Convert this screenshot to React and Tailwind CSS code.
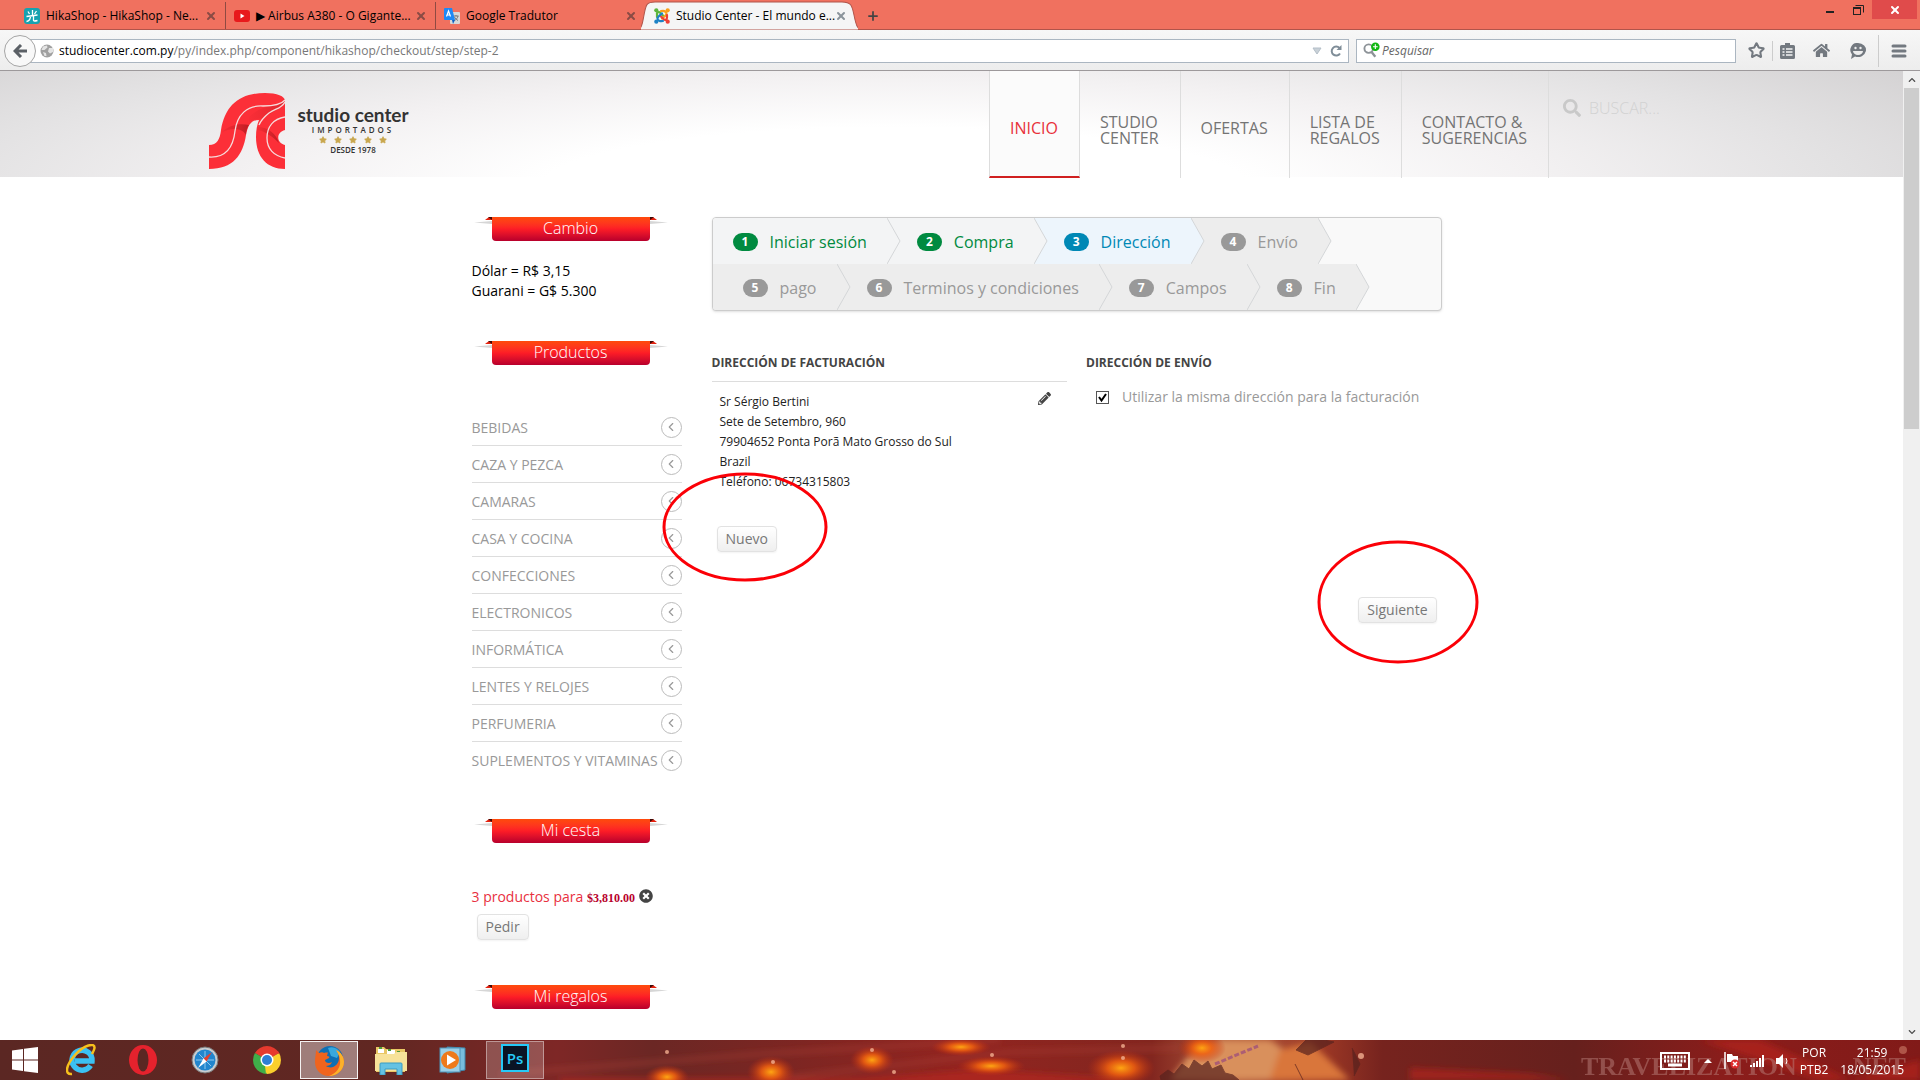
import React, { useState } from 'react';
import { FaSearch, FaPencilAlt, FaTimesCircle, FaHome, FaChevronDown, FaChevronUp } from 'react-icons/fa';
import { Plus, X, Star, ChevronLeft } from 'lucide-react';

const categories = [
  'Bebidas',
  'Caza y pezca',
  'Camaras',
  'Casa y cocina',
  'Confecciones',
  'Electronicos',
  'Informática',
  'Lentes y relojes',
  'Perfumeria',
  'Suplementos y vitaminas',
];

const firstSteps = [
  { number: 1, label: 'Iniciar sesión', status: 'done' },
  { number: 2, label: 'Compra', status: 'done' },
  { number: 3, label: 'Dirección', status: 'current' },
  { number: 4, label: 'Envío', status: 'todo' },
];

const lastSteps = [
  { number: 5, label: 'pago', status: 'todo' },
  { number: 6, label: 'Terminos y condiciones', status: 'todo' },
  { number: 7, label: 'Campos', status: 'todo' },
  { number: 8, label: 'Fin', status: 'todo' },
];

const stepStyles = {
  done: { item: 'bg-[#f3f4f5] text-[#008a40]', badge: 'bg-[#008a40]', arrow: '#f3f4f5' },
  current: { item: 'bg-[#edf5fc] text-[#0088b5]', badge: 'bg-[#0088b5]', arrow: '#edf5fc' },
  todo: { item: 'bg-[#ededed] text-[#999999]', badge: 'bg-[#999999]', arrow: '#ededed' },
};

/* ---------- Browser ---------- */

const HikaIcon = () => (
  <svg width="16" height="16" viewBox="0 0 16 16" className="shrink-0">
    <rect width="16" height="16" rx="3" fill="#17a2b0" />
    <path d="M8.500 2v5M4 3.500l1.500 2.500M12.500 3l-2 3M2.500 8.500L13.500 7M6.500 8c0 3-1.500 5-4 5.500M9.500 8v4.500q0 1 4 0" stroke="#fff" strokeWidth="1.300" fill="none" />
  </svg>
);

const YoutubeIcon = () => (
  <svg width="16" height="16" viewBox="0 0 16 16" className="shrink-0">
    <rect y="2" width="16" height="12" rx="3" fill="#e8191c" />
    <path d="M6.500 5.500v5l4-2.500z" fill="#fff" />
  </svg>
);

const TranslateIcon = () => (
  <svg width="16" height="16" viewBox="0 0 16 16" className="shrink-0">
    <rect x="6" y="4" width="10" height="12" rx="1" fill="#d8d8d8" />
    <path d="M9.500 8h5M12 7v1M14 8c-.5 2.500-2 3.500-3.500 4.500M10.500 9c.5 1.500 2 2.500 3.500 3.500" stroke="#777" fill="none" />
    <path d="M1 0h7l3 12H1a1 1 0 0 1-1-1V1a1 1 0 0 1 1-1z" fill="#1e88f5" />
    <path d="M8 12h3l-2 4z" fill="#0c5fc4" />
    <path d="M2.500 8.500l2-5.500 2 5.500M3.200 7h2.600" stroke="#fff" strokeWidth="1.200" fill="none" />
  </svg>
);

const JoomlaIcon = () => (
  <svg width="16" height="16" viewBox="0 0 16 16" className="shrink-0" fill="none" strokeWidth="2.200" strokeLinecap="round">
    <path d="M3 9V6.500C2.500 4 5 3.500 6.500 5L9.500 8" stroke="#5cb53c" />
    <path d="M7 3C9.500 2.500 12 3 12.500 5.500C13 7 11 8 8 10.500" stroke="#f9a01b" />
    <path d="M13 7V9.500C13 12 11 12.500 9.500 11L6.500 8" stroke="#ee4035" />
    <path d="M9 13C6 13.500 3.500 12.500 3.500 10.500C3.500 9 5 8 8 5.500" stroke="#1d82c5" />
    <g stroke="none">
      <circle cx="2.300" cy="2.300" r="2.100" fill="#5cb53c" />
      <circle cx="13.700" cy="2.300" r="2.100" fill="#f9a01b" />
      <circle cx="13.700" cy="13.700" r="2.100" fill="#ee4035" />
      <circle cx="2.300" cy="13.700" r="2.100" fill="#1d82c5" />
    </g>
  </svg>
);

const Tab = ({ icon, title }) => (
  <div className="flex h-full w-[210px] shrink-0 items-center border-r border-[#8f4a42] pl-2 pr-2">
    {icon}
    <span className="ml-1.5 flex-1 whitespace-nowrap">{title}</span>
    <button aria-label={`Cerrar ${title}`} className="text-[#8a4b45]"><X size={12} strokeWidth={4} /></button>
  </div>
);

const TitleBar = () => (
  <div className="flex h-[30px] items-stretch border-b border-[#b0544a] bg-[#f0715f] pl-4 text-[12px] text-black">
    <div className="flex pt-0.5">
      <Tab icon={<HikaIcon />} title="HikaShop - HikaShop - Ne..." />
      <Tab icon={<YoutubeIcon />} title="▶ Airbus A380 - O Gigante..." />
      <div className="flex w-[205px] shrink-0 items-center pl-2 pr-1">
        <TranslateIcon />
        <span className="ml-1.5 flex-1">Google Tradutor</span>
        <button aria-label="Cerrar Google Tradutor" className="text-[#8a4b45]"><X size={12} strokeWidth={4} /></button>
      </div>
    </div>
    <div className="relative -mb-px mt-px flex w-[217px] shrink-0 items-center pl-[13px] pr-3">
      <svg className="absolute inset-0 h-full w-full" viewBox="0 0 216 29" preserveAspectRatio="none">
        <path d="M-6 29C1 29 1 24 3 14C5 4 5 1 14 1H200C209 1 210 4 212 14C214 24 215 29 222 29z" fill="#f5f5f5" stroke="#b0544a" />
      </svg>
      <div className="relative flex w-full items-center">
        <JoomlaIcon />
        <span className="ml-1.5 flex-1 whitespace-nowrap">Studio Center - El mundo e...</span>
        <button aria-label="Cerrar Studio Center" className="text-[#8b949b]"><X size={12} strokeWidth={4} /></button>
      </div>
    </div>
    <button aria-label="Nueva pestaña" className="ml-2 pt-0.5 text-[#444]"><Plus size={14} strokeWidth={3} /></button>
    <div className="ml-auto flex items-start pr-[3px]">
      <button aria-label="Minimizar" className="flex h-[19px] w-7 items-center justify-center">
        <svg width="8" height="8"><path d="M0 6h8" stroke="#222" strokeWidth="2" /></svg>
      </button>
      <button aria-label="Restaurar" className="flex h-[19px] w-7 items-center justify-center">
        <svg width="11" height="10" fill="none" stroke="#222"><path d="M2.500 0.500h8v7" /><rect x=".5" y="2.500" width="7" height="7" /><path d="M0 3h8" strokeWidth="2" /></svg>
      </button>
      <button aria-label="Cerrar" className="flex h-[19px] w-[45px] items-center justify-center bg-[#e04b4b] text-white">
        <X size={12} strokeWidth={4} />
      </button>
    </div>
  </div>
);

const Toolbar = () => (
  <div className="flex h-[41px] items-center border-b border-[#9d999b] bg-gradient-to-b from-[#f7f7f7] to-[#ededed] pl-1 pr-[3px] pt-px text-[12px]">
    <button aria-label="Atrás" className="relative z-10 flex h-8 w-8 shrink-0 items-center justify-center rounded-full border border-[#a5a5a5] bg-[#f8f8f8]">
      <svg width="14" height="14" viewBox="0 0 14 14" fill="none" stroke="#5b6066" strokeWidth="3"><path d="M14 7H3M8 1L2 7l6 6" /></svg>
    </button>
    <div className="-ml-3 flex h-6 flex-1 items-center border border-[#abb6c1] bg-white pl-[15px] pr-1.5">
      <svg width="14" height="14" viewBox="0 0 14 14" className="shrink-0">
        <circle cx="7" cy="7" r="6.500" fill="#a0a0a0" />
        <path d="M3 2.500l4-1 .5 2-3 2.500-3 0zM9 4l4 0 0 4-3 1.500-2-2zM3 8l3 1 .5 3-2 0z" fill="#e4e4e4" />
      </svg>
      <span className="ml-[5px] flex-1 text-[#777]">
        <span className="text-black">studiocenter.com.py</span>/py/index.php/component/hikashop/checkout/step/step-2
      </span>
      <svg width="10" height="8"><path d="M1 1h8l-4 6z" fill="#c9d1d8" stroke="#b4bfc8" /></svg>
      <svg width="12" height="12" viewBox="0 0 12 12" className="ml-2" fill="none"><path d="M10 8.500a4.500 4.500 0 1 1-.5-5.500" stroke="#7f8d98" strokeWidth="2" /><path d="M11.500 0v5h-5z" fill="#7f8d98" /></svg>
    </div>
    <label className="ml-[7px] flex h-6 w-[380px] items-center border border-[#abb6c1] bg-white pl-1.5">
      <svg width="18" height="17" viewBox="0 0 18 17" fill="none">
        <circle cx="6" cy="6.500" r="4.500" stroke="#8d9398" strokeWidth="2" /><path d="M9 10l4 5" stroke="#8d9398" strokeWidth="2.500" />
        <circle cx="13" cy="4.500" r="4.500" fill="#12b712" /><path d="M13 2v5M10.500 4.500h5" stroke="#fff" strokeWidth="1.200" />
      </svg>
      <input aria-label="Pesquisar" placeholder="Pesquisar" className="ml-0.5 w-full bg-transparent italic outline-none placeholder:text-[#666]" />
    </label>
    <div className="ml-3 flex items-center text-[#737980]">
      <button aria-label="Favoritos"><Star size={17} strokeWidth={3} /></button>
      <div className="mx-[7px] h-5 w-px bg-[#ccc]" />
      <button aria-label="Marcadores">
        <svg width="15" height="16" viewBox="0 0 15 16"><path d="M5 0h5v2h3.500a1.500 1.500 0 0 1 1.500 1.500v11a1.500 1.500 0 0 1-1.500 1.500h-12A1.500 1.500 0 0 1 0 14.500v-11A1.500 1.500 0 0 1 1.500 2H5z" fill="currentColor" /><path d="M2.500 6h2M6 6h6.500M2.500 9h2M6 9h6.500M2.500 12h2M6 12h6.500" stroke="#f5f5f5" strokeWidth="1.500" /></svg>
      </button>
      <button aria-label="Inicio" className="ml-[18px]"><FaHome size={17} /></button>
      <button aria-label="Hello" className="ml-5">
        <svg width="16" height="16" viewBox="0 0 16 16"><path d="M8 0a8 7 0 1 1-3 13.500L1 16l1-4.500A7 7 0 0 1 8 0z" fill="currentColor" /><circle cx="5.500" cy="5" r="1.200" fill="#eee" /><circle cx="10.500" cy="5" r="1.200" fill="#eee" /><path d="M3 8h10a5 4 0 0 1-10 0z" fill="#eee" /></svg>
      </button>
      <div className="ml-3 mr-3 h-8 w-px bg-[#ccc]" />
      <button aria-label="Menú" className="mr-2.5">
        <svg width="16" height="14" stroke="currentColor" strokeWidth="3" strokeLinecap="round"><path d="M2 2h12M2 7h12M2 12h12" /></svg>
      </button>
    </div>
  </div>
);

const Scrollbar = () => (
  <div className="flex w-[17px] shrink-0 flex-col items-center bg-[#f0f0f0] text-[#505050]">
    <div className="flex h-[17px] items-center"><FaChevronUp size={8} /></div>
    <div className="h-[341px] w-[15px] bg-[#cdcdcd]" />
    <div className="mt-auto flex h-[17px] items-center"><FaChevronDown size={8} /></div>
  </div>
);

/* ---------- Site header ---------- */

const Logo = () => (
  <a href="#" className="mt-[22px] flex items-start">
    <svg width="76" height="76" viewBox="0 0 76 76">
      <defs>
        <linearGradient id="fold" x1="0" y1="0" x2="1" y2="0">
          <stop offset="0" stopColor="#c01a20" stopOpacity=".1" />
          <stop offset="1" stopColor="#a3151a" stopOpacity=".7" />
        </linearGradient>
      </defs>
      <path d="M0 52C8 52 11 46 12 37C16 13 30 0 56 0C68 0 76 3 76 8V37C67 39 67 50 76 52V76C58 76 47 64 47 44C47 37 48 32 50 27C42 27 39 32 37 42C34 62 24 76 0 76z" fill="#fc2f38" />
      <path d="M12 40C20 32 30 30 40 32C38 35 37 38 37 42C33 35 22 34 12 40z" fill="url(#fold)" />
      <path d="M48 34C60 34 67 41 70 50C64 44 56 38 48 37z" fill="url(#fold)" />
      <path d="M40 24C48 16 56 14 66 12C70 12 75 9 75 5C77 12 68 17 54 25C48 26 43 27 40 29z" fill="url(#fold)" opacity=".5" />
      <path d="M0 64C16 65 24 56 26 38C28 22 38 12 54 13C66 13 73 11 76 7M76 9C72 16 67 15 60 20C55 24 52 27 50 32M76 24C64 26 58 34 58 45C58 56 65 63 76 65" fill="none" stroke="#f6dcdc" strokeWidth="1.300" />
    </svg>
    <div className="ml-[13px] mt-3 flex w-[110px] flex-col items-center text-[#333]">
      <span className="font-['Lato'] text-[19px] font-bold leading-[20px] whitespace-nowrap">studio center</span>
      <span className="text-[8px] font-semibold leading-[10px] tracking-[3px]">IMPORTADOS</span>
      <div className="flex gap-[7px] py-px text-[#c9a74e]">
        {[1, 2, 3, 4, 5].map((star) => (
          <Star key={star} size={8} fill="currentColor" />
        ))}
      </div>
      <span className="text-[8px] font-semibold leading-[10px]">DESDE 1978</span>
    </div>
  </a>
);

const Header = () => (
  <header className="bg-[radial-gradient(ellipse_62%_190%_at_47%_110%,#ffffff_30%,#f3f1f2_55%,#e3e2e3_80%,#d3d1d2_105%)]">
    <div className="mx-auto flex h-[106px] max-w-[1485px] items-stretch">
      <Logo />
      <nav className="-mb-px ml-auto flex items-stretch text-[16px] leading-4 text-[#747474]">
        <a href="#" className="flex items-center border-x border-b-2 border-x-[#ddd] border-b-[#d02020] bg-[#fbfbfb] pl-5 pr-[21px] pt-2 text-[#e8303a]">INICIO</a>
        <a href="#" className="flex items-center border-r border-[#ddd] pl-5 pr-[21px] pt-2.5"><span>STUDIO<br />CENTER</span></a>
        <a href="#" className="flex items-center border-r border-[#ddd] pl-5 pr-[21px] pt-1.5">OFERTAS</a>
        <a href="#" className="flex items-center border-r border-[#ddd] pl-5 pr-[21px] pt-2.5"><span>LISTA DE<br />REGALOS</span></a>
        <a href="#" className="flex items-center border-r border-[#ddd] pl-5 pr-[21px] pt-2.5"><span>CONTACTO &amp;<br />SUGERENCIAS</span></a>
      </nav>
      <label className="flex w-[145px] items-center pb-8 pl-[14px] text-[#c9c9c9]">
        <FaSearch size={18} className="shrink-0" />
        <input aria-label="Buscar" placeholder="BUSCAR..." className="ml-2 w-full bg-transparent text-[16px] font-light outline-none placeholder:text-[#d2d2d2]" />
      </label>
    </div>
  </header>
);

/* ---------- Sidebar ---------- */

const Wing = ({ flip }) => (
  <svg width="18" height="24" viewBox="0 0 18 24" className={flip ? 'shrink-0 -scale-x-100' : 'shrink-0'}>
    <path d="M0 5.500L18 4v3z" fill="#d6d6d6" />
    <path d="M11 3L15 0h3v3z" fill="#e3200d" />
    <path d="M14 0h4v3z" fill="#3d0805" />
  </svg>
);

const Ribbon = ({ children }) => (
  <div className="ml-0.5 flex">
    <Wing />
    <h3 className="h-6 w-[158px] rounded-b bg-gradient-to-b from-[#ff4a0a] via-[#fd1c26] to-[#b8002c] text-center text-[16px] font-light leading-[22px] text-white">
      {children}
    </h3>
    <Wing flip />
  </div>
);

const SmallButton = ({ children }) => (
  <button className="h-[26px] rounded-sm border border-[#e2e2e2] bg-gradient-to-b from-white to-[#efefef] px-2 text-[14px] leading-[22px] text-[#777] shadow-xs">
    {children}
  </button>
);

const Sidebar = () => (
  <aside className="w-[210px] shrink-0 text-[14px]">
    <Ribbon>Cambio</Ribbon>
    <div className="mt-5 leading-5 text-black">
      <p>Dólar = R$ 3,15</p>
      <p>Guarani = G$ 5.300</p>
    </div>
    <div className="mt-10">
      <Ribbon>Productos</Ribbon>
    </div>
    <ul className="mt-11 text-[#999]">
      {categories.map((category) => (
        <li key={category} className="border-b border-[#ddd] last:border-b-0">
          <a href="#" className="flex h-9 items-center justify-between whitespace-nowrap uppercase">
            {category}
            <span className="flex h-[21px] w-[21px] shrink-0 items-center justify-center rounded-full border border-[#bbb]">
              <ChevronLeft size={14} strokeWidth={2} />
            </span>
          </a>
        </li>
      ))}
    </ul>
    <div className="mt-[41px]">
      <Ribbon>Mi cesta</Ribbon>
    </div>
    <div className="mt-11 flex items-center leading-5">
      <a href="#" className="text-[#e83040]">
        3 productos para <span className="font-['Liberation_Serif'] text-[12px] font-bold text-[#b8002c]">$3,810.00</span>
      </a>
      <button aria-label="Vaciar la cesta" className="-mt-1 ml-1 text-[#444]"><FaTimesCircle size={14} /></button>
    </div>
    <div className="ml-[5px] mt-1.5 flex">
      <SmallButton>Pedir</SmallButton>
    </div>
    <div className="mt-[45px]">
      <Ribbon>Mi regalos</Ribbon>
    </div>
  </aside>
);

/* ---------- Checkout ---------- */

const StepRow = ({ steps, start }) => (
  <ol start={start} className="flex h-[46px]">
    {steps.map((step) => {
      const style = stepStyles[step.status];
      return (
        <li key={step.number} className={`relative flex items-center pr-5 pt-0.5 ${step.number === 1 ? 'pl-5' : 'pl-[30px]'} ${style.item}`}>
          <span className={`flex h-[18px] w-[25px] items-center justify-center rounded-full text-[12px] font-bold text-white ${style.badge}`}>{step.number}</span>
          <span className="ml-3 whitespace-nowrap text-[16px]">{step.label}</span>
          <svg className="absolute left-full top-0 z-10" width="14" height="46" viewBox="0 0 14 46">
            <path d="M0 0L13 23L0 46z" fill={style.arrow} />
            <path d="M0 0L13 23L0 46" fill="none" stroke="#d4d6d8" />
          </svg>
        </li>
      );
    })}
  </ol>
);

const Checkout = () => {
  const [sameAddress, setSameAddress] = useState(true);

  return (
    <section className="min-w-0 flex-1">
      <div className="overflow-hidden rounded border border-[#ccc] bg-[#f9f9f9] shadow-sm">
        <StepRow steps={firstSteps} start={1} />
        <StepRow steps={lastSteps} start={5} />
      </div>

      <div className="mt-[42px] flex gap-[19px]">
        {/* Billing address */}
        <div className="flex-1">
          <h4 className="border-b border-[#ddd] pb-2 text-[12px] font-bold leading-5 text-[#444]">DIRECCIÓN DE FACTURACIÓN</h4>
          <div className="mt-2.5 flex items-start justify-between pl-2 pr-4">
            <address className="text-[12px] not-italic leading-5 text-[#222]">
              Sr Sérgio Bertini<br />
              Sete de Setembro, 960<br />
              79904652 Ponta Porã Mato Grosso do Sul<br />
              Brazil<br />
              Teléfono: 06734315803
            </address>
            <button aria-label="Editar dirección" className="text-[#444]"><FaPencilAlt size={13} /></button>
          </div>
          <div className="relative ml-[5px] mt-[34px] inline-flex">
            <SmallButton>Nuevo</SmallButton>
            <svg className="pointer-events-none absolute -left-14 -top-[55px] z-20 max-w-none" width="168" height="112">
              <ellipse cx="84" cy="56" rx="81" ry="53" fill="none" stroke="#fb0007" strokeWidth="3" />
            </svg>
          </div>
        </div>

        {/* Shipping address */}
        <div className="flex-1">
          <h4 className="text-[12px] font-bold leading-5 text-[#444]">DIRECCIÓN DE ENVÍO</h4>
          <label className="ml-2.5 mt-[14px] flex items-center text-[14px] leading-5 text-[#999]">
            <input
              type="checkbox"
              checked={sameAddress}
              onChange={(e) => setSameAddress(e.target.checked)}
              className="peer h-[13px] w-[13px] shrink-0 appearance-none border border-[#555] bg-white"
            />
            <svg className="pointer-events-none -ml-[13px] hidden shrink-0 peer-checked:block" width="13" height="13" fill="none" stroke="#000" strokeWidth="2"><path d="M3 6l2.500 3.500L10 3" /></svg>
            <span className="ml-[13px] whitespace-nowrap">Utilizar la misma dirección para la facturación</span>
          </label>
        </div>
      </div>

      <div className="mt-[45px] flex justify-end pr-[5px]">
        <div className="relative inline-flex">
          <SmallButton>Siguiente</SmallButton>
          <svg className="pointer-events-none absolute -left-[41px] -top-[57px] z-20 max-w-none" width="162" height="124">
            <ellipse cx="81" cy="62" rx="79" ry="60" fill="none" stroke="#fb0007" strokeWidth="3" />
          </svg>
        </div>
      </div>
    </section>
  );
};

/* ---------- Taskbar ---------- */

const glows = [
  [667, 37, 22, 12], [771, 32, 24, 16], [872, 20, 22, 14], [961, 7, 30, 9],
  [991, 26, 34, 10], [1121, 28, 34, 18], [1202, 8, 24, 15],
];

const TaskbarBackground = () => (
  <svg className="absolute inset-0 h-full w-full" viewBox="0 0 1920 40" preserveAspectRatio="xMidYMid slice">
    <defs>
      <linearGradient id="sky">
        <stop offset="0" stopColor="#5b2723" />
        <stop offset=".2" stopColor="#612722" />
        <stop offset=".29" stopColor="#7e2726" />
        <stop offset=".34" stopColor="#6b2724" />
        <stop offset=".5" stopColor="#922420" />
        <stop offset=".6" stopColor="#82261f" />
        <stop offset=".64" stopColor="#b05b3d" />
        <stop offset=".69" stopColor="#9b3725" />
        <stop offset=".72" stopColor="#76231e" />
        <stop offset=".82" stopColor="#66201d" />
        <stop offset=".9" stopColor="#8b1d1b" />
        <stop offset="1" stopColor="#811a18" />
      </linearGradient>
      <radialGradient id="glow">
        <stop offset="0" stopColor="#ffa512" />
        <stop offset=".4" stopColor="#f0600f" stopOpacity=".85" />
        <stop offset="1" stopColor="#c02b12" stopOpacity="0" />
      </radialGradient>
      <filter id="soft" x="-20%" y="-50%" width="140%" height="200%"><feGaussianBlur stdDeviation="3" /></filter>
    </defs>
    <rect width="1920" height="40" fill="url(#sky)" />
    <g filter="url(#soft)">
      <path d="M500 34L760 14L1000 0M780 38L1010 12L1180 8" stroke="#b04438" strokeWidth="3" opacity=".6" fill="none" />
      <path d="M560 38h300l120-8 140 8v6H560z" fill="#bd2a1c" opacity=".6" />
      <path d="M1170 40l20-26 30-14h50l20 14 18 26z" fill="#d9905c" />
      <path d="M1270 40l10-30 30-8 40 38z" fill="#d9763a" />
      <path d="M1410 28l120 6 40 6h-160zM1700 0l60 20 60 20h30L1760 0zM1850 40l70-20v20z" fill="#b4231f" opacity=".7" />
    </g>
    {glows.map(([x, y, rx, ry]) => (
      <ellipse key={x} cx={x} cy={y} rx={rx} ry={ry} fill="url(#glow)" />
    ))}
    <path d="M1160 36l8-6 6 4 8-10 7 5 5-9 8 6 6-5 4 8 9-4 4 8 8 2 6 5h-78zM1296 10l12 5 10-5 16-8-10-2h-18zM1295 24l8 16M1352 8l8 16-6 12" fill="#57221e" stroke="#57221e" opacity=".7" />
    <path d="M1215 24L1258 6" stroke="#a1527a" strokeWidth="3" strokeDasharray="5 2" opacity=".8" />
    <g fill="#f3b091" opacity=".8">
      <circle cx="667" cy="12" r="2" /><circle cx="773" cy="22" r="2" /><circle cx="872" cy="10" r="2" /><circle cx="894" cy="32" r="2" />
      <circle cx="992" cy="15" r="2" /><circle cx="1123" cy="6" r="2" /><circle cx="1123" cy="18" r="2" /><circle cx="1361" cy="16" r="3" /><circle cx="1903" cy="10" r="4" opacity=".5" />
    </g>
    <text x="1581" y="35" fontFamily="Liberation Serif, serif" fontWeight="700" fontSize="26" fill="#b9807b" opacity=".5">TRAVELIZATION</text>
    <text x="1846" y="35" fontFamily="Liberation Serif, serif" fontWeight="700" fontSize="26" fill="#b9807b" opacity=".5">.NET</text>
  </svg>
);

const AppButton = ({ label, className = '', children }) => (
  <button aria-label={label} className={`flex h-[38px] w-[58px] shrink-0 items-center justify-center ${className}`}>
    {children}
  </button>
);

const Taskbar = () => (
  <footer className="relative flex h-10 shrink-0 items-center overflow-hidden bg-[#5b2723] text-[12px] text-white">
    <TaskbarBackground />
    <div className="relative flex items-center">
      <AppButton label="Inicio" className="-ml-1">
        <svg width="26" height="26" viewBox="0 0 26 26" fill="#fff"><path d="M0 3.500L11 2v10.500H0zM12 1.800L26 0v12.500H12zM0 13.500h11V24L0 22.500zM12 13.500h14V26l-14-1.800z" /></svg>
      </AppButton>
      <AppButton label="Internet Explorer" className="-ml-0.5">
        <svg width="30" height="32" viewBox="0 0 30 32" fill="none">
          <path d="M24.500 21.500A10 10 0 1 1 26 17H9" stroke="#3bc1f3" strokeWidth="5.500" />
          <path d="M6 30C-2 31 0 21 9 11C18 1 29-2 28.500 4C28.300 6 27 8 26 10" stroke="#f7c01c" strokeWidth="2.500" />
        </svg>
      </AppButton>
      <AppButton label="Opera" className="ml-1">
        <svg width="28" height="30" viewBox="0 0 28 30"><ellipse cx="14" cy="15" rx="14" ry="15" fill="#e5222d" /><ellipse cx="14" cy="15" rx="5.500" ry="11.500" fill="#5b2723" /></svg>
      </AppButton>
      <AppButton label="Safari" className="ml-1">
        <svg width="28" height="28" viewBox="0 0 28 28">
          <circle cx="14" cy="14" r="13" fill="#c9cdd0" stroke="#777" /><circle cx="14" cy="14" r="10.500" fill="#2286ce" />
          <path d="M14 5v18M5 14h18M8 8l12 12" stroke="#8fc9ef" /><path d="M21 6l-5.500 9.500-3-3z" fill="#e4402e" /><path d="M7 22l5.500-9.500 3 3z" fill="#fff" />
        </svg>
      </AppButton>
      <AppButton label="Chrome" className="ml-1">
        <svg width="28" height="28" viewBox="0 0 28 28">
          <path d="M14 14L1.900 7A14 14 0 0 1 26.100 7z" fill="#e63a2e" />
          <path d="M14 14L26.100 7A14 14 0 0 1 14 28z" fill="#fbcf2c" />
          <path d="M14 14V28A14 14 0 0 1 1.900 7z" fill="#3fae49" />
          <path d="M14 7.500H26.300L25 5H14z" fill="#e63a2e" />
          <path d="M19.600 17.200L13 28L12 20z" fill="#fbcf2c" />
          <circle cx="14" cy="14" r="6.500" fill="#fff" /><circle cx="14" cy="14" r="5" fill="#2f7fd6" />
        </svg>
      </AppButton>
      <AppButton label="Firefox" className="ml-1 border border-white/90 bg-white/40">
        <svg width="30" height="31" viewBox="0 0 30 31">
          <circle cx="16" cy="14" r="13" fill="#0f6fb4" />
          <path d="M14 3c6-2 10 1 12 4l-3 6-6-2z" fill="#39a8dd" />
          <path d="M2 5l3 3c2-1 4-1 5 0 2-1 4 0 4-1l-1 4c2 0 3 1 2 2l-4 2c0 3 4 4 7 2-1 3-4 4-6 4 6 4 13-1 13-8 0-4-2-7-3-8 5 2 8 7 8 12 0 8-7 14-15 14S1 25 1 17C1 12 2 9 2 5z" fill="#f0641e" />
          <path d="M22 5c5 2 8 7 8 12 0 8-7 14-15 14 8-3 12-9 11-16 0-4-3-8-4-10z" fill="#fbb12a" />
        </svg>
      </AppButton>
      <AppButton label="Explorador" className="ml-1">
        <svg width="32" height="30" viewBox="0 0 32 30">
          <path d="M1 2h8l2 2h19v23H1z" fill="#e9c765" /><path d="M3 4h6v4H3zM12 5h8v4h-8zM21 7h8v4h-8z" fill="#fff" /><path d="M4 2h3v2H4zM13 4h3v2h-3zM22 6h3v2h-3z" fill="#4b9c3c" /><path d="M0 9h19l2-2h11v19H0z" fill="#f7e29a" />
          <path d="M5 19q0-1 1-1h20q1 0 1 1v11h-5v-6H10v6H5z" fill="#65c2e3" stroke="#3a9cc4" />
        </svg>
      </AppButton>
      <AppButton label="Media Player" className="ml-1">
        <svg width="28" height="28" viewBox="0 0 28 28">
          <path d="M8 1l18 1v22l-18 3z" fill="#78bddd" stroke="#3d87ac" /><rect x="1" y="2" width="20" height="24" fill="#9bd0e8" stroke="#4c93b8" />
          <circle cx="11" cy="14" r="9" fill="#ee7a1b" /><path d="M8 8.500l9 5.500-9 5.500z" fill="#fff" />
        </svg>
      </AppButton>
      <AppButton label="Photoshop" className="ml-1 border border-white/40 bg-white/20">
        <span className="mb-1 flex h-7 w-7 items-center justify-center border-2 border-[#26c9f7] bg-[#0a1424] text-[15px] font-semibold text-[#26c9f7]">Ps</span>
      </AppButton>
    </div>
    <div className="relative ml-auto flex items-center pr-4 pt-0.5">
      <svg width="30" height="18" viewBox="0 0 30 18" fill="none" stroke="#fff"><rect x="1" y="1" width="28" height="16" strokeWidth="2" /><path d="M4 5h22M4 9h22" strokeWidth="3" strokeDasharray="2 1.300" /><path d="M8 13h14" strokeWidth="3" /></svg>
      <svg className="ml-[14px]" width="8" height="4"><path d="M0 4l4-4 4 4z" fill="#fff" /></svg>
      <svg className="ml-3" width="16" height="18" viewBox="0 0 16 18"><path d="M1 0v17" stroke="#fff" strokeWidth="1.500" /><path d="M3 2h5l1 2h5v8H8l-1-2H3z" fill="#fff" /><circle cx="11" cy="12" r="4.500" fill="#dd2a2a" /><path d="M9 10l4 4M13 10l-4 4" stroke="#fff" strokeWidth="1.500" /></svg>
      <svg className="ml-2.5" width="14" height="12" stroke="#fff" strokeWidth="2"><path d="M1 12v-2M4 12V8M7 12V6M10 12V3M13 12V0" /></svg>
      <svg className="ml-3" width="14" height="14" viewBox="0 0 14 14"><path d="M0 4h3l4-4v14l-4-4H0z" fill="#fff" /><path d="M10 4q2 3 0 6" stroke="#fff" fill="none" /></svg>
      <div className="ml-2.5 text-center leading-[17px]">POR<br />PTB2</div>
      <div className="ml-3 text-center leading-[17px]">21:59<br />18/05/2015</div>
    </div>
  </footer>
);

const App = () => (
  <div className="flex min-h-screen flex-col bg-white font-['Open_Sans',sans-serif]">
    <TitleBar />
    <Toolbar />
    <div className="flex flex-1">
      <div className="min-w-0 flex-1">
        <Header />
        <main className="mx-auto flex max-w-[980px] gap-[30px] pb-[31px] pl-2.5 pt-10">
          <Sidebar />
          <Checkout />
        </main>
      </div>
      <Scrollbar />
    </div>
    <Taskbar />
  </div>
);

export default App;
